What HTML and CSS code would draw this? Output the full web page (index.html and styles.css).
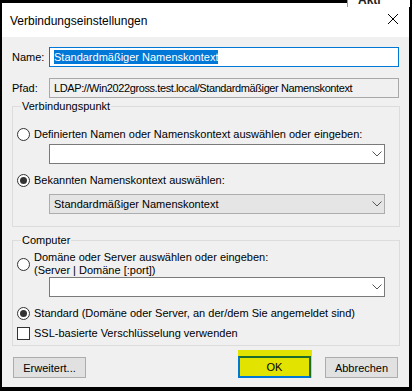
FILE: index.html
```html
<!DOCTYPE html>
<html lang="de">
<head>
<meta charset="utf-8">
<link rel="stylesheet" href="styles.css">
</head>
<body>
<div class="screen">
  <div class="bgwin"><span class="bgtext">Akti</span></div>
  <div class="dialog">
    <div class="titlebar">
      <span class="title">Verbindungseinstellungen</span>
      <svg class="close" width="12" height="12" viewBox="0 0 12 12"><path d="M1 1L11 11M11 1L1 11" stroke="#000" stroke-width="1" fill="none"/></svg>
    </div>
    <div class="body">
      <div class="row">
        <span class="label">Name:</span>
        <div class="field active"><span class="sel">Standardmäßiger Namenskontext</span></div>
      </div>
      <div class="row row2">
        <span class="label">Pfad:</span>
        <div class="field readonly"><span class="path">LDAP://Win2022gross.test.local/Standardmäßiger Namenskontext</span></div>
      </div>

      <fieldset class="group g1">
        <legend>Verbindungspunkt</legend>
        <div class="opt o1"><span class="radio"></span><span>Definierten Namen oder Namenskontext auswählen oder eingeben:</span></div>
        <div class="combo c1"><span class="ctext"></span><svg class="chev" width="10" height="6" viewBox="0 0 10 6"><path d="M0.5 0.5L5 5L9.5 0.5" stroke="#555" fill="none"/></svg></div>
        <div class="opt o2"><span class="radio on"></span><span>Bekannten Namenskontext auswählen:</span></div>
        <div class="combo c2 dis"><span class="ctext">Standardmäßiger Namenskontext</span><svg class="chev" width="10" height="6" viewBox="0 0 10 6"><path d="M0.5 0.5L5 5L9.5 0.5" stroke="#555" fill="none"/></svg></div>
      </fieldset>

      <fieldset class="group g2">
        <legend>Computer</legend>
        <div class="opt o3"><span class="radio"></span><span class="two">Domäne oder Server auswählen oder eingeben:<br>(Server | Domäne [:port])</span></div>
        <div class="combo c3"><span class="ctext"></span><svg class="chev" width="10" height="6" viewBox="0 0 10 6"><path d="M0.5 0.5L5 5L9.5 0.5" stroke="#555" fill="none"/></svg></div>
        <div class="opt o4"><span class="radio on"></span><span>Standard (Domäne oder Server, an der/dem Sie angemeldet sind)</span></div>
        <div class="opt o5"><span class="check"></span><span>SSL-basierte Verschlüsselung verwenden</span></div>
      </fieldset>

      <div class="buttons">
        <button class="btn adv">Erweitert...</button>
        <span class="spacer"></span>
        <span class="mark"><button class="btn ok">OK</button></span>
        <button class="btn cancel">Abbrechen</button>
      </div>
    </div>
  </div>
</div>
</body>
</html>
```
FILE: styles.css
```css
html, body {
  margin: 0;
  padding: 0;
  background: #000;
}
.screen {
  position: relative;
  width: 412px;
  height: 391px;
  overflow: hidden;
  font-family: "Liberation Sans", Arial, sans-serif;
  font-size: 11px;
  color: #000;
}
.bgwin {
  position: absolute;
  left: 347px;
  top: 0;
  width: 62px;
  height: 7px;
  background: #fff;
  border-left: 1px solid #9a9a9a;
  overflow: hidden;
  z-index: 2;
}
.bgtext {
  position: absolute;
  left: 10px;
  top: -7px;
  font-weight: bold;
  font-size: 12px;
  line-height: 14px;
  color: #222;
}
.dialog {
  margin: 3px 3px 0 2px;
  width: 407px;
  height: 384px;
  background: #f0f0f0;
  display: flex;
  flex-direction: column;
}
.titlebar {
  height: 34px;
  background: #fff;
  display: flex;
  align-items: center;
  padding: 0 8px 0 8px;
  flex: none;
}
.title {
  flex: 1;
  font-size: 12px;
  margin-top: 1px;
}
.close {
  margin-right: 2px;
  margin-top: -2px;
}
.body {
  padding: 10px 10px 0 10px;
  display: flex;
  flex-direction: column;
}
.row {
  display: flex;
  align-items: center;
  height: 20px;
}
.row2 {
  margin-top: 11px;
}
.label {
  width: 37px;
  flex: none;
}
.field {
  box-sizing: border-box;
  width: 351px;
  height: 20px;
  display: flex;
  align-items: center;
  padding-left: 4px;
  white-space: nowrap;
  overflow: hidden;
}
.field.active {
  background: #fff;
  border: 1px solid #0078d7;
}
.sel {
  background: #0078d7;
  color: #fff;
  line-height: 14px;
}
.field.readonly {
  background: #f0f0f0;
  border: 1px solid #a8a8a8;
}
.path {
  letter-spacing: -0.4px;
}
.group {
  margin: 1px 0 0 0;
  padding: 0 14px 0 4px;
  border: 1px solid #dcdcdc;
  min-width: 0;
  width: 388px;
  box-sizing: border-box;
}
.group legend {
  padding: 0 1px;
  margin-left: 4px;
  line-height: 14px;
}
.g1 {
  padding-bottom: 12px;
}
.g2 {
  margin-top: 6px;
  padding-bottom: 5px;
}
.opt {
  display: flex;
  align-items: center;
  gap: 4px;
  line-height: 14px;
  white-space: nowrap;
}
.o1 { margin-top: 14px; }
.o2 { margin-top: 9px; }
.o3 { margin-top: 4px; }
.o3 .two { line-height: 13px; }
.o4 { margin-top: 9px; }
.o5 { margin-top: 6px; }
.radio {
  box-sizing: border-box;
  width: 13px;
  height: 13px;
  border: 1px solid #333;
  border-radius: 50%;
  background: #fff;
  flex: none;
  display: flex;
  align-items: center;
  justify-content: center;
}
.radio.on::after {
  content: "";
  width: 7px;
  height: 7px;
  border-radius: 50%;
  background: #333;
}
.check {
  box-sizing: border-box;
  width: 13px;
  height: 13px;
  border: 1px solid #333;
  background: #fff;
  flex: none;
}
.combo {
  box-sizing: border-box;
  margin-left: 32px;
  width: 336px;
  height: 20px;
  background: #fff;
  border: 1px solid #7a7a7a;
  display: flex;
  align-items: center;
  padding: 0 2px 0 4px;
}
.c1 { margin-top: 3px; }
.c2 { margin-top: 7px; }
.c3 { margin-top: 0; }
.combo.dis {
  background: #e5e5e5;
  border-color: #adadad;
}
.ctext {
  flex: 1;
}
.chev {
  margin-right: 0;
}
.buttons {
  display: flex;
  align-items: flex-end;
  margin-top: 4px;
  padding-left: 1px;
  padding-right: 1px;
}
.spacer { flex: 1; }
.btn {
  box-sizing: border-box;
  height: 21px;
  font-family: "Liberation Sans", Arial, sans-serif;
  font-size: 11px;
  color: #000;
  background: #e1e1e1;
  border: 1px solid #adadad;
  padding: 0;
  margin: 0;
}
.adv { width: 73px; }
.cancel { width: 73px; margin-left: 13px; }
.mark {
  display: flex;
  background: #e3e300;
  padding-top: 6px;
  padding-right: 1px;
}
.ok {
  width: 73px;
  height: 22px;
  background: #e3e300;
  border: 2px solid #1f6b2a;
  border-left-color: #0078d7;
  border-bottom-color: #0078d7;
}
```
